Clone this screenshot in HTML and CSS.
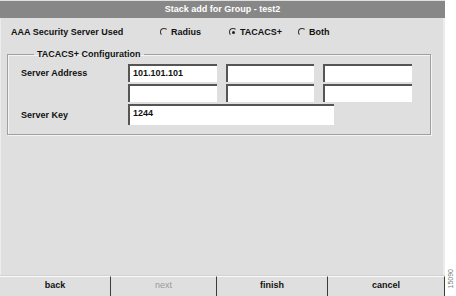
FILE: index.html
```html
<html>
<head>
<title>Stack add for Group</title>
<link rel="stylesheet" href="styles.css">
</head>
<body>
<div class="page">
  <div class="frame">
    <div class="title">Stack add for Group - test2</div>
    <div class="body">
      <div class="aaa">
        <span class="aaa-label">AAA Security Server Used</span>
        <span class="radio"><i class="dot"></i>Radius</span>
        <span class="radio"><i class="dot on"></i>TACACS+</span>
        <span class="radio"><i class="dot"></i>Both</span>
      </div>
      <fieldset class="group">
        <legend>TACACS+ Configuration</legend>
        <div class="grid">
          <div class="lbl">Server Address</div>
          <div class="field">101.101.101</div>
          <div class="field"></div>
          <div class="field"></div>
          <div class="lbl"></div>
          <div class="field"></div>
          <div class="field"></div>
          <div class="field"></div>
          <div class="lbl">Server Key</div>
          <div class="field key">1244</div>
        </div>
      </fieldset>
    </div>
    <div class="buttons">
      <div class="btn b1">back</div>
      <div class="btn b2 off">next</div>
      <div class="btn b3">finish</div>
      <div class="btn b4">cancel</div>
    </div>
  </div>
  <div class="side"><span class="fig">15090</span></div>
</div>
</body>
</html>
```

FILE: styles.css
```css
body
{
    margin: 0;
    background: #ffffff;
    font-family: "Liberation Sans", Arial, sans-serif;
    font-size: 9px;
    font-weight: bold;
    color: #111;
}
.page
{
    display: flex;
    height: 296px;
}
.frame
{
    width: 445px;
    display: flex;
    flex-direction: column;
    background: #dfdfdf;
}
.title
{
    margin-top: 1px;
    height: 17px;
    line-height: 17px;
    background: #878787;
    color: #fff;
    text-align: center;
}
.body
{
    flex: 1;
    border-left: 1px solid #ececec;
    border-right: 2px solid #ececec;
}
.aaa
{
    display: flex;
    align-items: center;
    height: 16px;
    margin-top: 6px;
    padding-left: 10px;
}
.aaa-label
{
    width: 149px;
}
.radio
{
    display: flex;
    align-items: center;
    width: 69px;
}
.dot
{
    display: inline-block;
    width: 6px;
    height: 6px;
    margin-right: 3px;
    border-radius: 50%;
    border-top: 1px solid #333;
    border-left: 1px solid #333;
    border-right: 1px solid transparent;
    border-bottom: 1px solid transparent;
    position: relative;
}
.dot.on::after
{
    content: "";
    position: absolute;
    left: 2px;
    top: 2px;
    width: 3px;
    height: 3px;
    border-radius: 50%;
    background: #222;
}
.group
{
    margin: 8px 12px 0 6px;
    padding: 4px 0 9px 13px;
    border: 1px solid #a0a0a0;
    box-shadow: inset 1px 1px 0 #f4f4f4, 1px 1px 0 #f4f4f4;
}
.group legend
{
    margin-left: 13px;
    padding: 0 3px;
    line-height: 12px;
}
.grid
{
    display: grid;
    grid-template-columns: 98px 89px 88px 89px;
    grid-template-rows: 18px 18px 21px;
    column-gap: 9px;
    row-gap: 2px;
}
.lbl
{
    align-self: center;
}
.field
{
    background: #fff;
    border-top: 2px solid #555;
    border-left: 2px solid #555;
    padding-left: 3px;
    line-height: 14px;
}
.field.key
{
    grid-column: 2 / 5;
    width: 201px;
    line-height: 15px;
}
.buttons
{
    display: flex;
    height: 20px;
    border-top: 1px solid #d2d2d2;
}
.btn
{
    border-top: 1px solid #fafafa;
    line-height: 17px;
    text-align: center;
    border-right: 1px solid #3c3c3c;
}
.b1 { width: 110px; }
.b2 { width: 105px; }
.b3 { width: 110px; }
.b4 { width: 116px; }
.off
{
    color: #9a9a9a;
    font-weight: normal;
}
.side
{
    flex: 1;
    display: flex;
    align-items: flex-end;
    justify-content: center;
    padding-bottom: 8px;
}
.fig
{
    writing-mode: vertical-rl;
    transform: rotate(180deg);
    font-size: 7px;
    font-weight: normal;
    color: #777;
}
```
